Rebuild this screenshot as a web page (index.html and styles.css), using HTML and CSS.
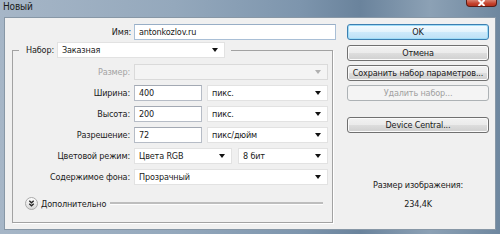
FILE: index.html
```html
<!DOCTYPE html>
<html>
<head>
<meta charset="utf-8">
<link rel="stylesheet" href="styles.css">
</head>
<body>
<div class="window">
  <div class="titlebar">
    <span class="title">Новый</span>
    <span class="close"><svg width="9" height="6" viewBox="0 0 9 6"><path d="M1.5 0 L7.5 6 M7.5 0 L1.5 6" stroke="#fff" stroke-width="2"/></svg></span>
  </div>
  <div class="client">
    <div class="left">
      <div class="name-row">
        <span class="name-label">Имя:</span>
        <div class="input name-input">antonkozlov.ru</div>
      </div>
      <fieldset class="group">
        <legend class="legend">
          <span class="legend-label">Набор:</span>
          <div class="select preset"><span class="sel-text">Заказная</span><span class="arrow"></span></div>
        </legend>
        <div class="rows">
          <div class="row">
            <span class="label disabled-text">Размер:</span>
            <div class="select wide disabled"><span class="sel-text"></span><span class="arrow"></span></div>
          </div>
          <div class="row">
            <span class="label">Ширина:</span>
            <div class="input num">400</div>
            <div class="select unit"><span class="sel-text">пикс.</span><span class="arrow"></span></div>
          </div>
          <div class="row">
            <span class="label">Высота:</span>
            <div class="input num">200</div>
            <div class="select unit"><span class="sel-text">пикс.</span><span class="arrow"></span></div>
          </div>
          <div class="row">
            <span class="label">Разрешение:</span>
            <div class="input num">72</div>
            <div class="select unit"><span class="sel-text">пикс/дюйм</span><span class="arrow"></span></div>
          </div>
          <div class="row">
            <span class="label">Цветовой режим:</span>
            <div class="select mode"><span class="sel-text">Цвета RGB</span><span class="arrow"></span></div>
            <div class="select bits"><span class="sel-text">8 бит</span><span class="arrow"></span></div>
          </div>
          <div class="row">
            <span class="label">Содержимое фона:</span>
            <div class="select wide"><span class="sel-text">Прозрачный</span><span class="arrow"></span></div>
          </div>
        </div>
        <div class="more">
          <svg class="more-icon" width="13" height="13" viewBox="0 0 13 13">
            <defs>
              <linearGradient id="cg" x1="0" y1="0" x2="0" y2="1">
                <stop offset="0" stop-color="#ffffff"/>
                <stop offset="1" stop-color="#d6d6d6"/>
              </linearGradient>
            </defs>
            <circle cx="6.5" cy="6.5" r="6" fill="url(#cg)" stroke="#a9a9a9"/>
            <path d="M4.3 3.8 L6.5 5.8 L8.7 3.8 M4.3 6.8 L6.5 8.8 L8.7 6.8" fill="none" stroke="#222" stroke-width="1.3"/>
          </svg>
          <span class="more-text">Дополнительно</span>
          <span class="more-line"></span>
        </div>
      </fieldset>
    </div>
    <div class="right">
      <div class="btn default">OK</div>
      <div class="btn cancel">Отмена</div>
      <div class="btn">Сохранить набор параметров...</div>
      <div class="btn disabled-btn">Удалить набор...</div>
      <div class="btn central">Device Central...</div>
      <div class="info">
        <div class="info-label">Размер изображения:</div>
        <div class="info-value">234,4K</div>
      </div>
    </div>
  </div>
</div>
</body>
</html>
```

FILE: styles.css
```css
html, body {
  margin: 0;
  padding: 0;
}
body {
  width: 500px;
  height: 234px;
  overflow: hidden;
  font-family: "DejaVu Sans Condensed", "DejaVu Sans", sans-serif;
  font-size: 9px;
  letter-spacing: -0.15px;
  color: #1a1a1a;
}
.window {
  width: 500px;
  height: 234px;
  box-sizing: border-box;
  display: flex;
  flex-direction: column;
  padding: 0 4px 4px 4px;
  background: linear-gradient(90deg, #a6b6c7 0%, #94a8bc 35%, #7d95ad 60%, #6a839c 72%, #8ca1b5 86%, #6e879f 100%);
}
.titlebar {
  height: 17px;
  display: flex;
  justify-content: space-between;
  align-items: flex-start;
  flex: none;
}
.title {
  font-size: 10px;
  color: #1a1a1a;
  line-height: 13px;
  margin-left: -1px;
}
.close {
  width: 31px;
  height: 7px;
  margin-right: -1px;
  box-sizing: border-box;
  border: 1px solid #5a1b14;
  border-top: none;
  border-radius: 0 0 4px 4px;
  background: linear-gradient(#d9806f, #c4412c 60%, #b5321d);
  display: flex;
  justify-content: center;
  align-items: flex-start;
}
.close svg {
  display: block;
}
.client {
  flex: 1;
  display: flex;
  background: #f0f0f0;
  border: 1px solid #8797a6;
}
.left {
  width: 331px;
  flex: none;
}
.name-row {
  display: flex;
  align-items: center;
  margin-top: 6px;
  height: 16px;
}
.name-label {
  width: 126px;
  text-align: right;
  margin-right: 3px;
}
.input {
  box-sizing: border-box;
  height: 16px;
  background: #fff;
  border: 1px solid #b6bcc6;
  border-top-color: #a3a9b3;
  padding: 0 4px;
  line-height: 14px;
}
.name-input {
  width: 202px;
  border-color: #a9bfd6;
  border-top-color: #98aec6;
}
.group {
  margin: 2px 0 0 7px;
  width: 321px;
  box-sizing: border-box;
  border: 1px solid #a2a2a2;
  box-shadow: 1px 1px 0 #ffffff;
  padding: 6px 0 12px 0;
  min-width: 0;
}
.legend {
  display: flex;
  align-items: center;
  padding: 0 6px 0 7px;
  margin-left: 6px;
  height: 16px;
}
.legend-label {
  margin-right: 3px;
}
.select {
  box-sizing: border-box;
  height: 16px;
  background: #fff;
  border: 1px solid #e2e2e2;
  display: flex;
  align-items: center;
  padding: 0 6px 0 4px;
}
.sel-text {
  flex: 1;
  white-space: nowrap;
}
.arrow {
  width: 0;
  height: 0;
  border-left: 3px solid transparent;
  border-right: 3px solid transparent;
  border-top: 4px solid #111;
  flex: none;
}
.preset {
  width: 168px;
}
.rows {
  display: flex;
  flex-direction: column;
  gap: 5px;
}
.row {
  display: flex;
  align-items: center;
  height: 16px;
}
.label {
  width: 117px;
  text-align: right;
  margin-right: 4px;
  white-space: nowrap;
}
.disabled-text {
  color: #a3a3a3;
}
.wide {
  width: 194px;
}
.disabled {
  background: #f4f4f4;
  border-color: #dadada;
}
.disabled .arrow {
  border-top-color: #b0b0b0;
}
.num {
  width: 68px;
}
.unit {
  width: 121px;
  margin-left: 5px;
}
.mode {
  width: 98px;
}
.bits {
  width: 90px;
  margin-left: 6px;
}
.more {
  display: flex;
  align-items: center;
  height: 13px;
  margin-top: 12px;
  padding-left: 12px;
}
.more-icon {
  display: block;
  flex: none;
}
.more-text {
  margin-left: 3px;
  white-space: nowrap;
}
.more-line {
  flex: 1;
  height: 2px;
  background: #bdbdbd;
  border-bottom: 1px solid #fdfdfd;
  margin: 0 9px 0 4px;
}
.right {
  width: 142px;
  margin-left: 11px;
  display: flex;
  flex-direction: column;
  padding-top: 6px;
}
.btn {
  box-sizing: border-box;
  height: 16px;
  border: 1px solid #707070;
  border-radius: 3px;
  background: linear-gradient(#f2f2f2 0%, #ebebeb 48%, #dddddd 52%, #cfcfcf 100%);
  box-shadow: inset 0 0 0 1px #fbfbfb;
  text-align: center;
  line-height: 14px;
  white-space: nowrap;
  margin-bottom: 4px;
}
.default {
  border-color: #3c7fb1;
  background: linear-gradient(#f4fbff 0%, #e3f3fc 48%, #cdeafb 52%, #bce0f5 100%);
  box-shadow: inset 0 0 0 1px #9fdcf7;
  margin-bottom: 5px;
}
.disabled-btn {
  border-color: #adb2b5;
  background: #f4f4f4;
  color: #a0a0a0;
  box-shadow: none;
}
.central {
  margin-top: 12px;
}
.info {
  margin-top: 42px;
  text-align: center;
  margin-left: 0;
}
.info-label {
  line-height: 12px;
}
.info-value {
  margin-top: 7px;
  line-height: 12px;
}
```
